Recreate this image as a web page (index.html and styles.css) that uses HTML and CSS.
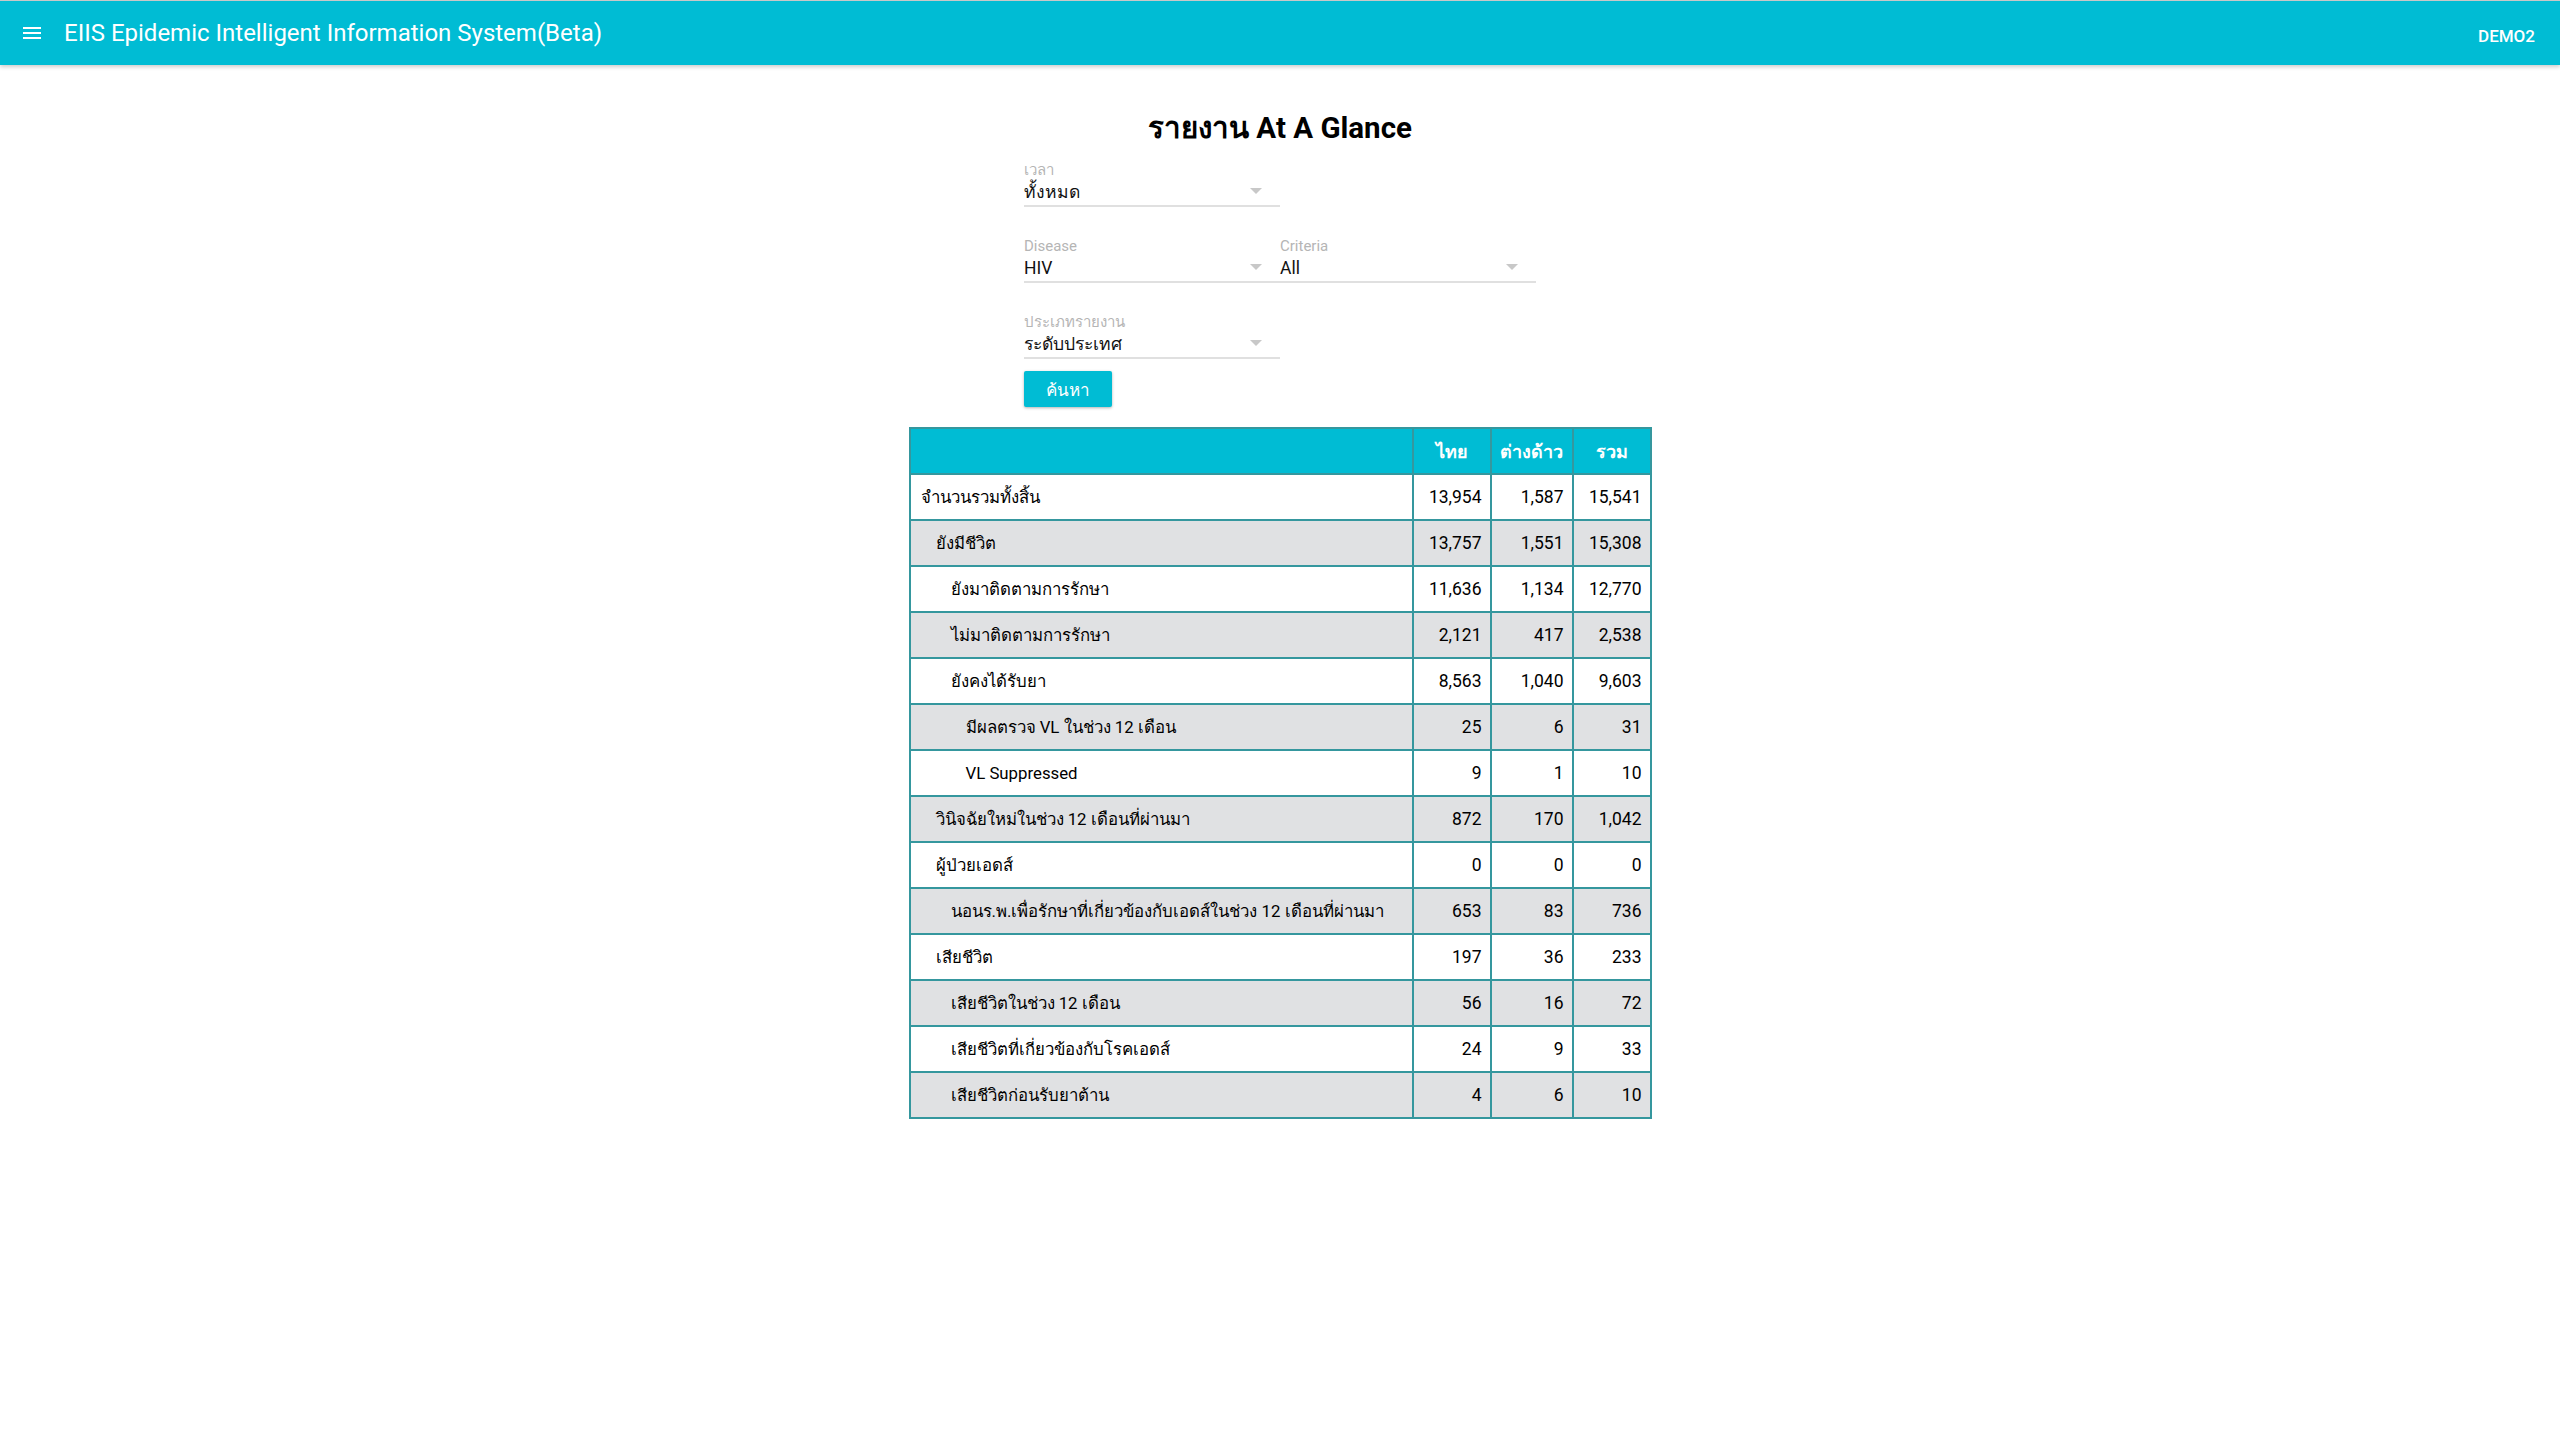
FILE: index.html
```html
<!DOCTYPE html>
<html lang="th">
<head>
<meta charset="utf-8">
<title>EIIS</title>
<link rel="stylesheet" href="styles.css">
</head>
<body>
<header class="topbar">
  <div class="menu-icon">
    <svg width="18" height="12" viewBox="0 0 18 12"><rect x="0" y="0" width="18" height="2" fill="#fff"/><rect x="0" y="5" width="18" height="2" fill="#fff"/><rect x="0" y="10" width="18" height="2" fill="#fff"/></svg>
  </div>
  <div class="app-title">EIIS Epidemic Intelligent Information System(Beta)</div>
  <div class="user">DEMO2</div>
</header>
<main class="content">
  <h1 class="page-title">รายงาน At A Glance</h1>
  <form class="filters">
    <div class="row">
      <div class="field">
        <div class="label">เวลา</div>
        <div class="value">ทั้งหมด</div>
        <span class="caret"></span>
      </div>
    </div>
    <div class="row">
      <div class="field">
        <div class="label">Disease</div>
        <div class="value">HIV</div>
        <span class="caret"></span>
      </div>
      <div class="field">
        <div class="label">Criteria</div>
        <div class="value">All</div>
        <span class="caret"></span>
      </div>
    </div>
    <div class="row">
      <div class="field">
        <div class="label">ประเภทรายงาน</div>
        <div class="value">ระดับประเทศ</div>
        <span class="caret"></span>
      </div>
    </div>
    <button type="button" class="search-btn">ค้นหา</button>
  </form>
  <table class="report">
    <colgroup>
      <col class="c-name"><col class="c-th"><col class="c-fo"><col class="c-all">
    </colgroup>
    <thead>
      <tr><th class="name"></th><th>ไทย</th><th>ต่างด้าว</th><th>รวม</th></tr>
    </thead>
    <tbody>
      <tr><td class="name l0">จำนวนรวมทั้งสิ้น</td><td>13,954</td><td>1,587</td><td>15,541</td></tr>
      <tr><td class="name l1">ยังมีชีวิต</td><td>13,757</td><td>1,551</td><td>15,308</td></tr>
      <tr><td class="name l2">ยังมาติดตามการรักษา</td><td>11,636</td><td>1,134</td><td>12,770</td></tr>
      <tr><td class="name l2">ไม่มาติดตามการรักษา</td><td>2,121</td><td>417</td><td>2,538</td></tr>
      <tr><td class="name l2">ยังคงได้รับยา</td><td>8,563</td><td>1,040</td><td>9,603</td></tr>
      <tr><td class="name l3">มีผลตรวจ VL ในช่วง 12 เดือน</td><td>25</td><td>6</td><td>31</td></tr>
      <tr><td class="name l3">VL Suppressed</td><td>9</td><td>1</td><td>10</td></tr>
      <tr><td class="name l1">วินิจฉัยใหม่ในช่วง 12 เดือนที่ผ่านมา</td><td>872</td><td>170</td><td>1,042</td></tr>
      <tr><td class="name l1">ผู้ป่วยเอดส์</td><td>0</td><td>0</td><td>0</td></tr>
      <tr><td class="name l2">นอนร.พ.เพื่อรักษาที่เกี่ยวข้องกับเอดส์ในช่วง 12 เดือนที่ผ่านมา</td><td>653</td><td>83</td><td>736</td></tr>
      <tr><td class="name l1">เสียชีวิต</td><td>197</td><td>36</td><td>233</td></tr>
      <tr><td class="name l2">เสียชีวิตในช่วง 12 เดือน</td><td>56</td><td>16</td><td>72</td></tr>
      <tr><td class="name l2">เสียชีวิตที่เกี่ยวข้องกับโรคเอดส์</td><td>24</td><td>9</td><td>33</td></tr>
      <tr><td class="name l2">เสียชีวิตก่อนรับยาต้าน</td><td>4</td><td>6</td><td>10</td></tr>
    </tbody>
  </table>
</main>
</body>
</html>
```

FILE: styles.css
```css
html, body {
  margin: 0;
  padding: 0;
  background: #ffffff;
  font-family: Roboto, "Noto Sans", "DejaVu Sans", sans-serif;
  color: #000;
}

.topbar {
  height: 64px;
  background: #00bcd4;
  border-top: 1px solid #c8c8c8;
  display: flex;
  align-items: center;
  box-shadow: 0 2px 4px rgba(0,0,0,0.2);
  color: #fff;
}

.menu-icon {
  width: 18px;
  height: 12px;
  margin-left: 23px;
  display: flex;
}

.app-title {
  margin-left: 23px;
  font-size: 24px;
  font-weight: 400;
  flex: 1;
}

.user {
  font-size: 17px;
  font-weight: 500;
  margin-right: 25px;
  padding-top: 6px;
}

.content {
  display: flex;
  flex-direction: column;
  align-items: center;
}

.page-title {
  margin: 45px 0 0 0;
  font-size: 29.5px;
  font-weight: 700;
  line-height: 36px;
}

.filters {
  width: 512px;
  display: flex;
  flex-direction: column;
  margin-top: 15px;
}

.row {
  display: flex;
  margin-bottom: 30px;
}

.row:nth-child(3) {
  margin-bottom: 12px;
}

.field {
  width: 256px;
  position: relative;
  border-bottom: 2px solid #e0e0e0;
  box-sizing: border-box;
  padding-bottom: 2px;
}

.label {
  font-size: 15px;
  color: #b5b5b5;
  line-height: 18px;
}

.value {
  font-size: 17.5px;
  line-height: 22px;
  margin-top: 2px;
  color: #111;
}

.caret {
  position: absolute;
  right: 18px;
  top: 27px;
  width: 0;
  height: 0;
  border-left: 6px solid transparent;
  border-right: 6px solid transparent;
  border-top: 6px solid #c8c8c8;
}

.search-btn {
  align-self: flex-start;
  width: 88px;
  height: 36px;
  border: none;
  border-radius: 2px;
  background: #00bcd4;
  color: #fff;
  font-family: Roboto, "Noto Sans", sans-serif;
  font-size: 17px;
  box-shadow: 0 1px 3px rgba(0,0,0,0.3);
  padding: 0;
}

.report {
  margin-top: 20px;
  width: 741px;
  table-layout: fixed;
  border-collapse: collapse;
  font-size: 17.5px;
  border: 2px solid #35979e;
}

.c-name { width: 503px; }
.c-th { width: 78px; }
.c-fo { width: 82px; }
.c-all { width: 78px; }

.report th, .report td {
  border: 2px solid #35979e;
  height: 44px;
  padding: 0 8px;
}

.report th {
  background: #00bcd4;
  color: #fff;
  font-weight: 700;
  font-size: 18px;
  text-align: center;
  white-space: nowrap;
}

.report td {
  text-align: right;
  white-space: nowrap;
}

.report td.name {
  text-align: left;
  font-size: 16.8px;
  overflow: hidden;
}

.report tbody tr:nth-child(even) td {
  background: #e0e1e3;
}

.l0 { padding-left: 10px !important; }
.l1 { padding-left: 25px !important; }
.l2 { padding-left: 40px !important; }
.l3 { padding-left: 55px !important; }
```
